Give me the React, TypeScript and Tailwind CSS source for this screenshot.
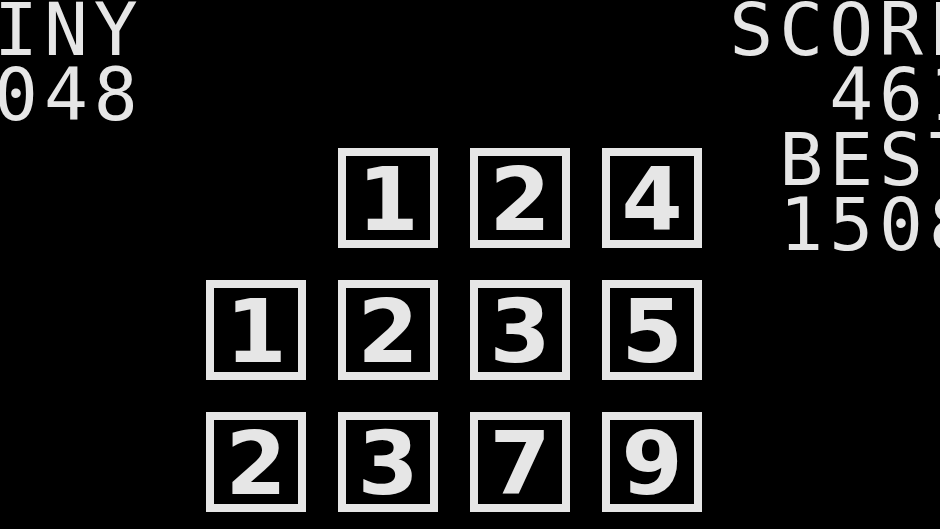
const board: (number | null)[][] = [
  [null, 1, 2, 4],
  [1, 2, 3, 5],
  [2, 3, 7, 9],
  [3, 4, 6, 8],
]

function Tile({ value }: { value: number | null }) {
  if (value === null) return <div className="h-[100px] w-[100px]" />
  return (
    <div className="flex h-[100px] w-[100px] items-center justify-center border-[8px] border-[#e6e6e6] bg-black">
      <span
        className="translate-y-[2px] text-[88px] font-bold leading-none text-[#e6e6e6]"
        style={{ fontFamily: '"DejaVu Sans", sans-serif' }}
      >
        {value}
      </span>
    </div>
  )
}

export default function App() {
  const label = "whitespace-nowrap text-[73px] leading-[65px] tracking-[6px] text-[#e6e6e6]"
  return (
    <div
      className="h-[529px] w-[940px] overflow-hidden bg-black"
      style={{ fontFamily: '"DejaVu Sans Mono", monospace' }}
    >
      <div className="-ml-[56px] -mt-[3px] flex w-[1040px]">
        <div className="w-[262px] shrink-0">
          <div className={label}>TINY</div>
          <div className={label}>2048</div>
        </div>

        <div className="mt-[151px] grid w-[496px] shrink-0 grid-cols-[repeat(4,100px)] gap-[32px]">
          {board.flat().map((v, i) => (
            <Tile key={i} value={v} />
          ))}
        </div>

        <div className="flex-1 pr-[5px] text-right">
          <div className={label}>SCORE</div>
          <div className={label}>461</div>
          <div className={label}>BEST</div>
          <div className={label}>1508</div>
        </div>
      </div>
    </div>
  )
}
